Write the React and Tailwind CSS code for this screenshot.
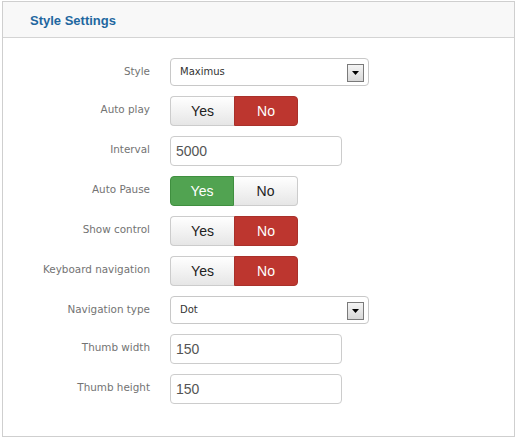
import React from "react";

const font = { fontFamily: '"Liberation Sans", Arial, sans-serif' };

function Label({ children }) {
  return (
    <div className="w-[147px] shrink-0 pt-[4px] text-right text-[10.4px] leading-[18px] text-[#737373]" style={{ fontFamily: '"DejaVu Sans", Tahoma, sans-serif' }}>
      {children}
    </div>
  );
}

function Arrow() {
  return (
    <div className="absolute right-[4px] top-[5px] flex h-[18px] w-[17px] items-center justify-center border border-[#7a7a7a] bg-gradient-to-b from-[#f4f4f4] to-[#d8d8d8]">
      <svg width="7" height="4" viewBox="0 0 7 4"><path d="M0 0h7L3.5 4z" fill="#000" /></svg>
    </div>
  );
}

function Select({ value }) {
  return (
    <div className="relative h-[28px] w-[199px] rounded-[4px] border border-[#c8c8c8] bg-white">
      <div className="pl-[9px] pt-[6px] text-[10px] leading-[14px] text-[#333]" style={{ fontFamily: '"DejaVu Sans", Tahoma, sans-serif' }}>{value}</div>
      <Arrow />
    </div>
  );
}

function Input({ value }) {
  return (
    <div className="flex h-[30px] w-[172px] items-center rounded-[4px] border border-[#cccccc] bg-white pl-[5px] text-[14px] text-[#555]" style={font}>
      {value}
    </div>
  );
}

function Toggle({ active }) {
  const yesOn = active === "yes";
  return (
    <div className="flex h-[30px] w-[128px] text-[14px]" style={font}>
      <div
        className={
          yesOn
            ? "flex w-[64px] items-center justify-center rounded-l-[4px] border border-[#3f8f3f] bg-[#51a351] text-white"
            : "flex w-[64px] items-center justify-center rounded-l-[4px] border border-r-0 border-[#cccccc] bg-gradient-to-b from-white to-[#e6e6e6] text-[#222]"
        }
      >
        Yes
      </div>
      <div
        className={
          yesOn
            ? "flex w-[64px] items-center justify-center rounded-r-[4px] border border-l-0 border-[#cccccc] bg-gradient-to-b from-white to-[#e6e6e6] text-[#222]"
            : "flex w-[64px] items-center justify-center rounded-r-[4px] border border-[#a9302a] bg-[#bd362f] text-white"
        }
      >
        No
      </div>
    </div>
  );
}

function Row({ label, children }) {
  return (
    <div className="mb-[10px] flex gap-[20px]">
      <Label>{label}</Label>
      {children}
    </div>
  );
}

export default function App() {
  return (
    <div className="h-[437px] w-[516px] bg-white pl-[2px] pt-[1px]">
      <div className="flex h-[436px] w-[513px] flex-col border border-[#cfcfcf]">
        <div className="flex h-[36px] items-center border-b border-[#d4d4d4] bg-[#f8f8f8] pl-[27px] pt-[2px]">
          <span className="text-[13px] font-bold text-[#1f67a0]" style={font}>Style Settings</span>
        </div>
        <div className="pt-[20px]">
          <Row label="Style"><Select value="Maximus" /></Row>
          <Row label="Auto play"><Toggle active="no" /></Row>
          <Row label="Interval"><Input value="5000" /></Row>
          <Row label="Auto Pause"><Toggle active="yes" /></Row>
          <Row label="Show control"><Toggle active="no" /></Row>
          <Row label="Keyboard navigation"><Toggle active="no" /></Row>
          <Row label="Navigation type"><Select value="Dot" /></Row>
          <Row label="Thumb width"><Input value="150" /></Row>
          <Row label="Thumb height"><Input value="150" /></Row>
        </div>
      </div>
    </div>
  );
}
